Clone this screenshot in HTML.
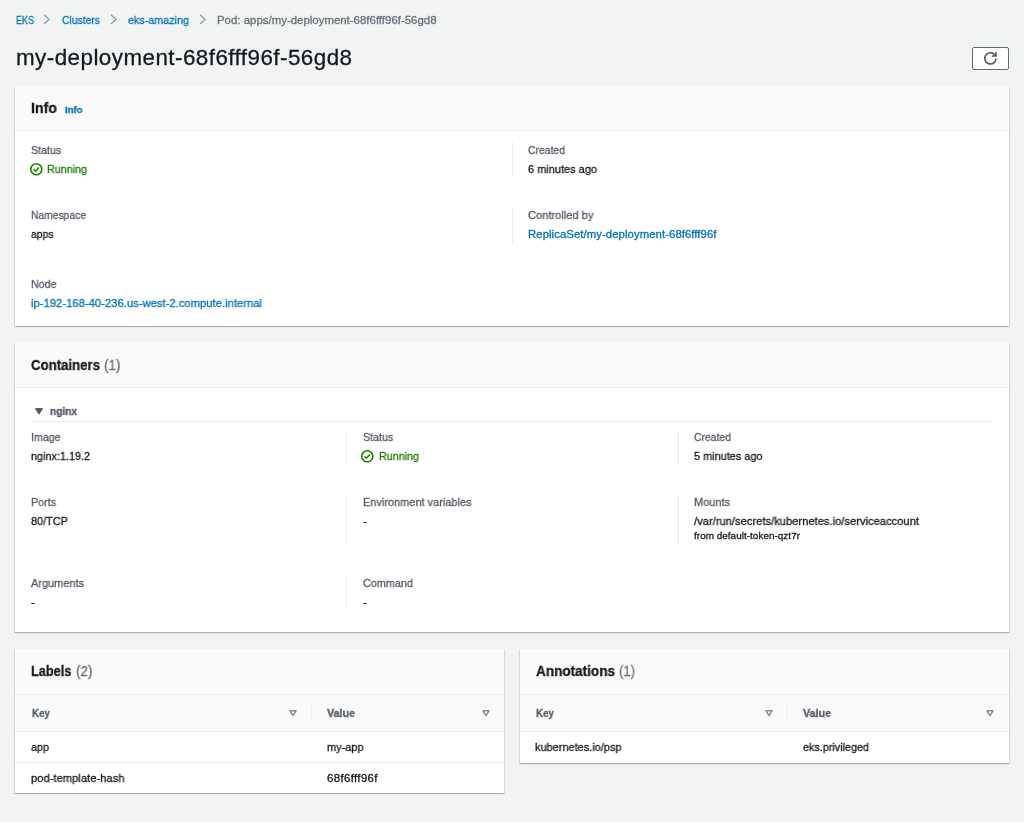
<!DOCTYPE html>
<html lang="en">
<head>
<meta charset="utf-8">
<title>my-deployment-68f6fff96f-56gd8</title>
<style>
*{box-sizing:border-box;margin:0;padding:0}
html,body{width:1024px;height:822px;overflow:hidden}
body{background:#f2f3f3;font-family:"Liberation Sans",sans-serif;font-size:11.4px;color:#16191f;position:relative}
.t{position:absolute;white-space:nowrap;line-height:14px;height:14px;display:block;transform-origin:0 50%;-webkit-text-stroke:0.3px currentColor;will-change:transform}
.lbl{color:#545b64}
a{color:#0073bb;text-decoration:none}
.grn{color:#1d8102}
.panel{position:absolute;background:#fff;box-shadow:0 1px 1px 0 rgba(0,28,36,.16),1px 1px 1px 0 rgba(0,28,36,.09),-1px 1px 1px 0 rgba(0,28,36,.09)}
.phead{position:absolute;left:0;right:0;top:0;background:#fafafa;border-bottom:1px solid #eaeded}
.h2{font-size:14.4px;font-weight:bold;line-height:18px;height:18px}
.cnt{font-size:14.4px;line-height:18px;height:18px;color:#687078}
.vline{position:absolute;width:1px;background:#edefef}
.hline{position:absolute;height:1px;background:#eaeded}
.thead{position:absolute;left:0;right:0;background:#fafafa;border-bottom:1px solid #eaeded}
.th{font-weight:bold;color:#545b64}
.sm{font-size:9.9px;line-height:12px;height:12px}
h1.t{font-size:22.4px;font-weight:normal;line-height:28px;height:28px}
svg{position:absolute;overflow:visible}
</style>
</head>
<body>
<nav aria-label="Breadcrumbs">
<a class="t" href="#" style="left:15.5px;top:13px;transform:scaleX(0.7896)">EKS</a>
<svg style="left:42.9px;top:14px" width="8" height="11" viewBox="0 0 8 11"><path d="M1 0.7 L6 5.4 L1 10.1" fill="none" stroke="#95a3a4" stroke-width="1.4"/></svg>
<a class="t" href="#" style="left:62px;top:13px;transform:scaleX(0.9095)">Clusters</a>
<svg style="left:109.6px;top:14px" width="8" height="11" viewBox="0 0 8 11"><path d="M1 0.7 L6 5.4 L1 10.1" fill="none" stroke="#95a3a4" stroke-width="1.4"/></svg>
<a class="t" href="#" style="left:128px;top:13px;transform:scaleX(0.9446)">eks-amazing</a>
<svg style="left:198.8px;top:14px" width="8" height="11" viewBox="0 0 8 11"><path d="M1 0.7 L6 5.4 L1 10.1" fill="none" stroke="#95a3a4" stroke-width="1.4"/></svg>
<span class="t" style="left:217px;top:13px;color:#687078;letter-spacing:0.021px">Pod: apps/my-deployment-68f6fff96f-56gd8</span>
</nav>
<header>
<h1 class="t" style="left:15.7px;top:44.2px;letter-spacing:0.455px">my-deployment-68f6fff96f-56gd8</h1>
<button type="button" aria-label="Refresh" style="position:absolute;left:972px;top:46.5px;width:37px;height:23px;background:#fff;border:1px solid #636a73;border-radius:2px;padding:0"><svg style="left:11px;top:4.6px" width="12.8" height="12.8" viewBox="0 0 16 16"><path d="M10 5h5V0" fill="none" stroke="#545b64" stroke-width="2"/><path d="M15 8a6.957 6.957 0 01-7 7 6.957 6.957 0 01-7-7 6.957 6.957 0 017-7 6.87 6.87 0 016.3 4" fill="none" stroke="#545b64" stroke-width="2"/></svg></button>
</header>
<main>
<section>
<div class="panel" style="left:15px;top:86px;width:993.6px;height:240px"><div class="phead" style="height:45px"></div></div>
<svg style="left:29.9px;top:163px" width="12.6" height="12.6" viewBox="0 0 16 16"><circle cx="8" cy="8" r="7" fill="none" stroke="#1d8102" stroke-width="2"/><path d="M4.6 8 L7 10.4 L11.4 5.8" fill="none" stroke="#1d8102" stroke-width="2"/></svg>
<div class="vline" style="left:512px;top:142px;height:34px"></div>
<div class="vline" style="left:512px;top:207px;height:38px"></div>
<h2 class="t h2" style="left:31px;top:99.1px;transform:scaleX(0.9858)">Info</h2>
<a class="t" href="#" style="left:64.8px;top:103.4px;font-size:9.9px;font-weight:bold;transform:scaleX(0.9664)">Info</a>
<span class="t lbl" style="left:31px;top:143px;transform:scaleX(0.9382)">Status</span>
<span class="t grn" style="left:47px;top:162px;transform:scaleX(0.9426)">Running</span>
<span class="t lbl" style="left:528px;top:143px;transform:scaleX(0.9129)">Created</span>
<span class="t" style="left:528px;top:162px;transform:scaleX(0.9642)">6 minutes ago</span>
<span class="t lbl" style="left:31px;top:208px;transform:scaleX(0.9049)">Namespace</span>
<span class="t" style="left:31px;top:227px;transform:scaleX(0.9108)">apps</span>
<span class="t lbl" style="left:528px;top:208px;transform:scaleX(0.9758)">Controlled by</span>
<a class="t" href="#" style="left:528px;top:227px;letter-spacing:0.044px">ReplicaSet/my-deployment-68f6fff96f</a>
<span class="t lbl" style="left:31px;top:277px;transform:scaleX(0.9363)">Node</span>
<a class="t" href="#" style="left:31px;top:296px;transform:scaleX(0.9887)">ip-192-168-40-236.us-west-2.compute.internal</a>
</section>
<section>
<div class="panel" style="left:15px;top:342px;width:993.6px;height:290px"><div class="phead" style="height:46px"></div></div>
<svg style="left:35px;top:408px" width="8" height="6.5" viewBox="0 0 8 6.5"><path d="M0.7 0.7 H7.3 L4 5.8 Z" fill="#545b64" stroke="#545b64" stroke-width="1.2" stroke-linejoin="round"/></svg>
<div class="hline" style="left:31px;top:421px;width:962px"></div>
<svg style="left:361.3px;top:450.3px" width="12.6" height="12.6" viewBox="0 0 16 16"><circle cx="8" cy="8" r="7" fill="none" stroke="#1d8102" stroke-width="2"/><path d="M4.6 8 L7 10.4 L11.4 5.8" fill="none" stroke="#1d8102" stroke-width="2"/></svg>
<div class="vline" style="left:346px;top:430px;height:34px"></div>
<div class="vline" style="left:678px;top:430px;height:34px"></div>
<div class="vline" style="left:346px;top:495px;height:50px"></div>
<div class="vline" style="left:678px;top:495px;height:50px"></div>
<div class="vline" style="left:346px;top:575px;height:34px"></div>
<h2 class="t h2" style="left:31px;top:356px;transform:scaleX(0.9179)">Containers</h2>
<span class="t cnt" style="left:104px;top:356px;transform:scaleX(0.9378)">(1)</span>
<span class="t" style="left:50.3px;top:403.5px;font-weight:bold;color:#545b64;transform:scaleX(0.8889)">nginx</span>
<span class="t lbl" style="left:31px;top:430px;transform:scaleX(0.9314)">Image</span>
<span class="t" style="left:31px;top:449px;transform:scaleX(0.9504)">nginx:1.19.2</span>
<span class="t lbl" style="left:362.5px;top:430px;transform:scaleX(0.9382)">Status</span>
<span class="t grn" style="left:378.7px;top:449px;transform:scaleX(0.9426)">Running</span>
<span class="t lbl" style="left:694px;top:430px;transform:scaleX(0.9129)">Created</span>
<span class="t" style="left:694px;top:449px;transform:scaleX(0.9572)">5 minutes ago</span>
<span class="t lbl" style="left:31px;top:495px;transform:scaleX(0.9401)">Ports</span>
<span class="t" style="left:31px;top:514px;transform:scaleX(0.9579)">80/TCP</span>
<span class="t lbl" style="left:362.5px;top:495px;transform:scaleX(0.9627)">Environment variables</span>
<span class="t" style="left:362.7px;top:514px">-</span>
<span class="t lbl" style="left:694px;top:495px;transform:scaleX(0.9636)">Mounts</span>
<span class="t" style="left:694px;top:514px;transform:scaleX(0.9817)">/var/run/secrets/kubernetes.io/serviceaccount</span>
<span class="t sm" style="left:694px;top:529.5px;letter-spacing:0.050px">from default-token-qzt7r</span>
<span class="t lbl" style="left:31px;top:576px;transform:scaleX(0.9620)">Arguments</span>
<span class="t" style="left:31px;top:595px">-</span>
<span class="t lbl" style="left:362.5px;top:576px;transform:scaleX(0.9515)">Command</span>
<span class="t" style="left:362.7px;top:595px">-</span>
</section>
<section>
<div class="panel" style="left:15px;top:649px;width:489px;height:144px"><div class="phead" style="height:46px"></div><div class="thead" style="top:46px;height:37px"></div><div class="hline" style="left:0;top:113px;width:489px"></div></div>
<svg style="left:288.5px;top:709.9px" width="8" height="6.6" viewBox="0 0 8 6.6"><path d="M1 0.85 H7 L4 5.6 Z" fill="none" stroke="#839192" stroke-width="1.5" stroke-linejoin="round"/></svg>
<svg style="left:481.8px;top:709.9px" width="8" height="6.6" viewBox="0 0 8 6.6"><path d="M1 0.85 H7 L4 5.6 Z" fill="none" stroke="#839192" stroke-width="1.5" stroke-linejoin="round"/></svg>
<div class="vline" style="left:311px;top:704px;height:18px"></div>
<h2 class="t h2" style="left:31px;top:662px;transform:scaleX(0.8883)">Labels</h2>
<span class="t cnt" style="left:76px;top:662px;transform:scaleX(0.9378)">(2)</span>
<span class="t th" style="left:31.75px;top:706px;transform:scaleX(0.8610)">Key</span>
<span class="t th" style="left:327px;top:706px;transform:scaleX(0.9407)">Value</span>
<span class="t" style="left:31px;top:740.2px;transform:scaleX(0.9466)">app</span>
<span class="t" style="left:327px;top:740.2px;transform:scaleX(0.9609)">my-app</span>
<span class="t" style="left:31px;top:771px;transform:scaleX(0.9844)">pod-template-hash</span>
<span class="t" style="left:327px;top:771px;letter-spacing:0.378px">68f6fff96f</span>
</section>
<section>
<div class="panel" style="left:520px;top:649px;width:488.6px;height:114px"><div class="phead" style="height:46px"></div><div class="thead" style="top:46px;height:37px"></div></div>
<svg style="left:765.2px;top:709.9px" width="8" height="6.6" viewBox="0 0 8 6.6"><path d="M1 0.85 H7 L4 5.6 Z" fill="none" stroke="#839192" stroke-width="1.5" stroke-linejoin="round"/></svg>
<svg style="left:986.2px;top:709.9px" width="8" height="6.6" viewBox="0 0 8 6.6"><path d="M1 0.85 H7 L4 5.6 Z" fill="none" stroke="#839192" stroke-width="1.5" stroke-linejoin="round"/></svg>
<div class="vline" style="left:787px;top:704px;height:18px"></div>
<h2 class="t h2" style="left:535.5px;top:662px;transform:scaleX(0.9412)">Annotations</h2>
<span class="t cnt" style="left:618.7px;top:662px;transform:scaleX(0.9094)">(1)</span>
<span class="t th" style="left:536.4px;top:706px;transform:scaleX(0.8610)">Key</span>
<span class="t th" style="left:803px;top:706px;transform:scaleX(0.9407)">Value</span>
<span class="t" style="left:535.3px;top:740.2px;transform:scaleX(0.9619)">kubernetes.io/psp</span>
<span class="t" style="left:802.6px;top:740.2px;transform:scaleX(0.9475)">eks.privileged</span>
</section>
</main>
</body>
</html>
